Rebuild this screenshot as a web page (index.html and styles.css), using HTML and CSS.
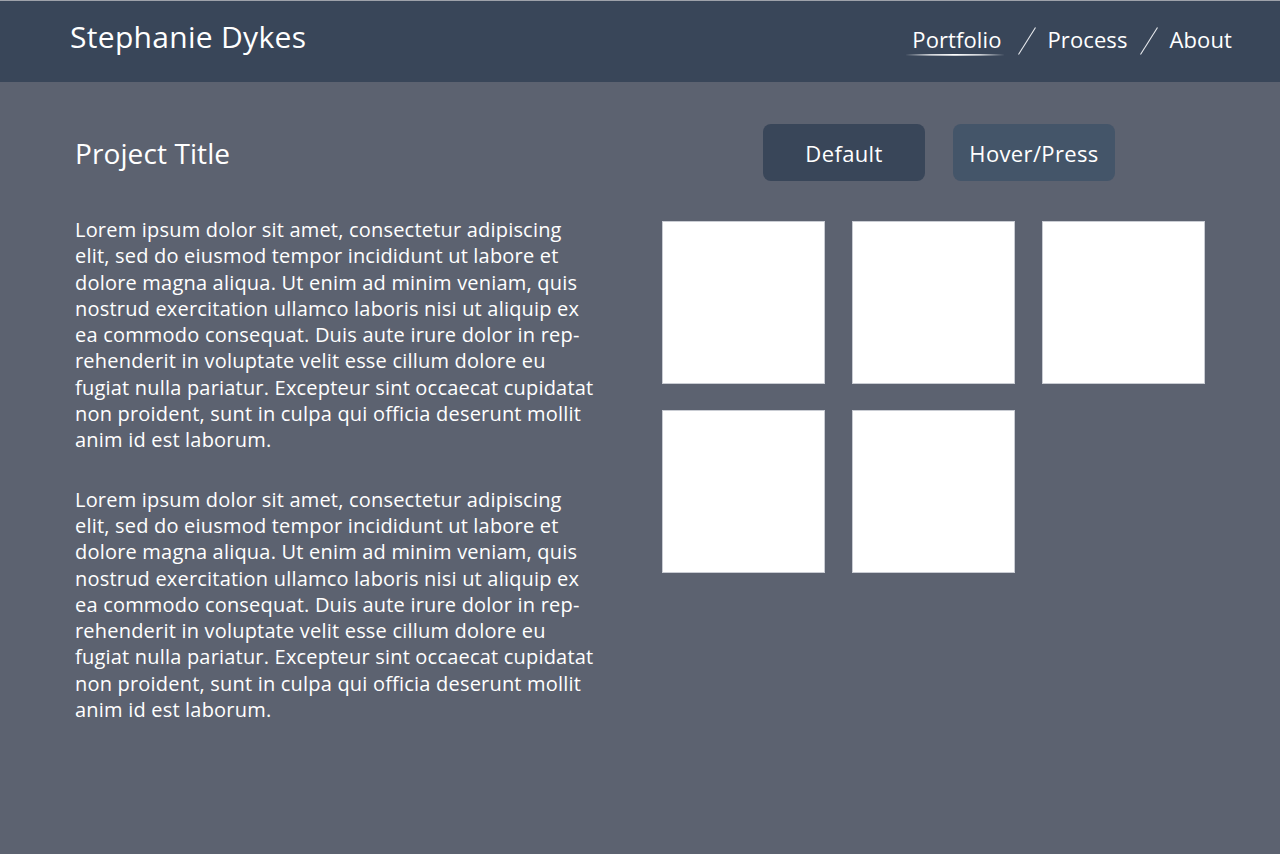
FILE: index.html
```html
<!DOCTYPE html>
<html lang="en">
<head>
<meta charset="utf-8">
<title>Stephanie Dykes</title>
<link rel="stylesheet" href="styles.css">
</head>
<body>
<header class="topbar">
  <div class="brand">Stephanie Dykes</div>
  <nav class="nav">
    <a class="nav-link active" href="#">Portfolio
      <svg class="underline" width="100" height="4" viewBox="0 0 100 4"><path d="M0 2 Q50 0.2 100 2 Q50 3.4 0 2 Z" fill="#ffffff"/></svg>
    </a>
    <svg class="slash" width="18" height="28" viewBox="0 0 18 28"><line x1="17.5" y1="0.5" x2="0.5" y2="27.5" stroke="#e8eaee" stroke-width="1.1"/></svg>
    <a class="nav-link" href="#">Process</a>
    <svg class="slash" width="18" height="28" viewBox="0 0 18 28"><line x1="17.5" y1="0.5" x2="0.5" y2="27.5" stroke="#e8eaee" stroke-width="1.1"/></svg>
    <a class="nav-link" href="#">About</a>
  </nav>
</header>
<main class="content">
  <section class="text-col">
    <div class="title-row"><h1 class="project-title">Project Title</h1></div>
    <p class="body-text">Lorem ipsum dolor sit amet, consectetur adipiscing<br>elit, sed do eiusmod tempor incididunt ut labore et<br>dolore magna aliqua. Ut enim ad minim veniam, quis<br>nostrud exercitation ullamco laboris nisi ut aliquip ex<br>ea commodo consequat. Duis aute irure dolor in rep-<br>rehenderit in voluptate velit esse cillum dolore eu<br>fugiat nulla pariatur. Excepteur sint occaecat cupidatat<br>non proident, sunt in culpa qui officia deserunt mollit<br>anim id est laborum.</p>
    <p class="body-text">Lorem ipsum dolor sit amet, consectetur adipiscing<br>elit, sed do eiusmod tempor incididunt ut labore et<br>dolore magna aliqua. Ut enim ad minim veniam, quis<br>nostrud exercitation ullamco laboris nisi ut aliquip ex<br>ea commodo consequat. Duis aute irure dolor in rep-<br>rehenderit in voluptate velit esse cillum dolore eu<br>fugiat nulla pariatur. Excepteur sint occaecat cupidatat<br>non proident, sunt in culpa qui officia deserunt mollit<br>anim id est laborum.</p>
  </section>
  <section class="media-col">
    <div class="button-row">
      <button class="btn btn-default">Default</button>
      <button class="btn btn-hover">Hover/Press</button>
    </div>
    <div class="thumbs">
      <div class="thumb"></div>
      <div class="thumb"></div>
      <div class="thumb"></div>
      <div class="thumb"></div>
      <div class="thumb"></div>
    </div>
  </section>
</main>
</body>
</html>
```

FILE: styles.css
```css
* { box-sizing: border-box; }
html, body { margin: 0; padding: 0; }
body {
  background: #5c6270;
  color: #ffffff;
  font-family: "Open Sans", Lato, "Liberation Sans", sans-serif;
  min-height: 854px;
}
.topbar {
  height: 82px;
  border-top: 1px solid #9ea2aa;
  background: #394659;
  display: flex;
  align-items: center;
  justify-content: space-between;
  padding: 0 48px 0 70px;
}
.brand {
  font-size: 30px;
  letter-spacing: 0.3px;
  font-weight: 400;
  margin-top: -10px;
}
.nav {
  display: flex;
  align-items: center;
  gap: 12px;
  margin-top: -5px;
  margin-right: 0;
}
.nav-link {
  position: relative;
  color: #ffffff;
  text-decoration: none;
  font-size: 22px;
  letter-spacing: 0.1px;
}
.nav-link.active { padding: 0 4px; }
.underline {
  position: absolute;
  left: -3px;
  bottom: -3px;
}
.slash { display: block; margin-top: 4px; }
.content {
  display: flex;
  padding: 42px 75px 0 75px;
}
.text-col { width: 587px; }
.title-row {
  height: 57px;
  display: flex;
  align-items: center;
}
.project-title {
  margin: 0;
  font-size: 28px;
  letter-spacing: 0.1px;
  font-weight: 400;
}
.body-text {
  margin: 36px 0 0;
  font-size: 20px;
  letter-spacing: 0.2px;
  line-height: 26.3px;
}
.body-text + .body-text { margin-top: 33px; }
.media-col { width: 543px; }
.button-row {
  display: flex;
  gap: 28px;
  padding-left: 101px;
}
.btn {
  width: 162px;
  height: 57px;
  border: none;
  border-radius: 8px;
  color: #ffffff;
  font-family: inherit;
  font-size: 22px;
  letter-spacing: 0.35px;
}
.btn-default { background: #394659; }
.btn-hover { background: #445569; }
.thumbs {
  margin-top: 40px;
  display: grid;
  grid-template-columns: repeat(3, 163px);
  gap: 26px 27px;
}
.thumb {
  width: 163px;
  height: 163px;
  background: #ffffff;
  border: 1px solid #c9ccd3;
}
```
